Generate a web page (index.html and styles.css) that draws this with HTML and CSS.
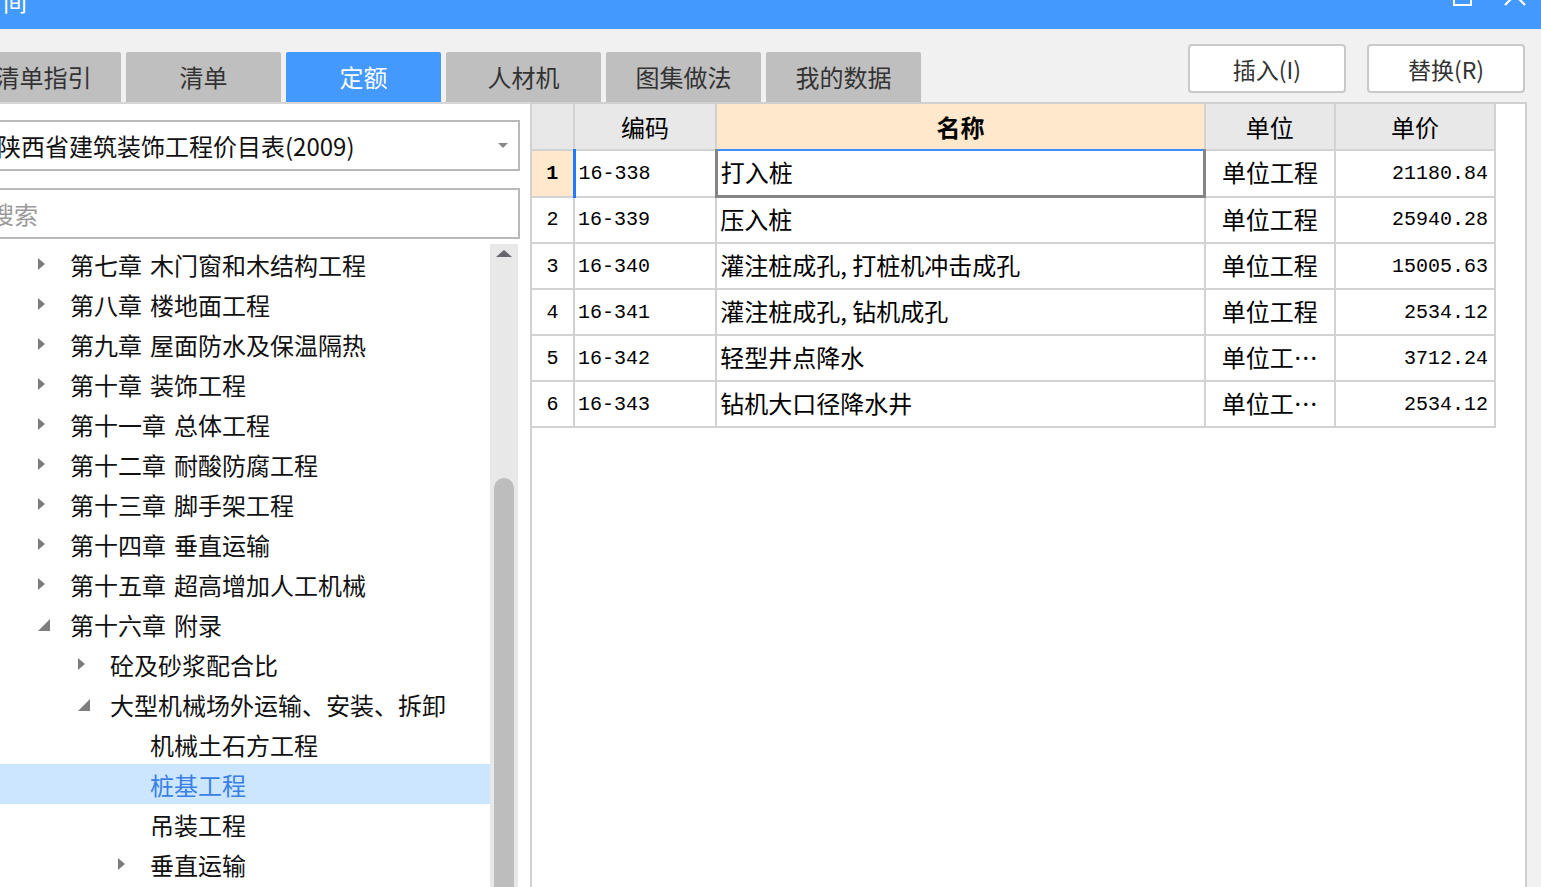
FILE: index.html
```html
<!DOCTYPE html>
<html lang="zh-CN">
<head>
<meta charset="utf-8">
<title>定额查询</title>
<link rel="stylesheet" href="styles.css">
</head>
<body>
<div class="window">
  <header class="titlebar">
    <span class="title">间</span>
    <div class="win-controls">
      <svg class="ctl-max" width="20" height="20" viewBox="0 0 20 20"><rect x="1" y="1" width="17" height="16" fill="none" stroke="#fff" stroke-width="2"/></svg>
      <svg class="ctl-close" width="22" height="22" viewBox="0 0 22 22"><path d="M1 0L21 20M21 0L1 20" stroke="#fff" stroke-width="2.2" fill="none"/></svg>
    </div>
  </header>

  <div class="toolbar">
    <nav class="tabs">
      <div class="tab">清单指引</div>
      <div class="tab">清单</div>
      <div class="tab active">定额</div>
      <div class="tab">人材机</div>
      <div class="tab">图集做法</div>
      <div class="tab">我的数据</div>
    </nav>
    <div class="actions">
      <button class="btn">插入(I)</button>
      <button class="btn">替换(R)</button>
    </div>
  </div>

  <main class="content">
    <aside class="left-panel">
      <div class="select">
        <span class="select-text">陕西省建筑装饰工程价目表(2009)</span>
        <svg class="select-arrow" width="10" height="5" viewBox="0 0 10 5"><path d="M0 0H10L5 5Z" fill="#8a8a8a"/></svg>
      </div>
      <div class="search">搜索</div>
      <div class="tree-wrap">
        <ul class="tree">
          <li class="node l1"><span class="tg"><svg class="tri" width="8" height="12" viewBox="0 0 8 12"><path d="M0 0L7 6L0 12Z"/></svg></span>第七章<span class="sp"> </span>木门窗和木结构工程</li>
          <li class="node l1"><span class="tg"><svg class="tri" width="8" height="12" viewBox="0 0 8 12"><path d="M0 0L7 6L0 12Z"/></svg></span>第八章<span class="sp"> </span>楼地面工程</li>
          <li class="node l1"><span class="tg"><svg class="tri" width="8" height="12" viewBox="0 0 8 12"><path d="M0 0L7 6L0 12Z"/></svg></span>第九章<span class="sp"> </span>屋面防水及保温隔热</li>
          <li class="node l1"><span class="tg"><svg class="tri" width="8" height="12" viewBox="0 0 8 12"><path d="M0 0L7 6L0 12Z"/></svg></span>第十章<span class="sp"> </span>装饰工程</li>
          <li class="node l1"><span class="tg"><svg class="tri" width="8" height="12" viewBox="0 0 8 12"><path d="M0 0L7 6L0 12Z"/></svg></span>第十一章<span class="sp"> </span>总体工程</li>
          <li class="node l1"><span class="tg"><svg class="tri" width="8" height="12" viewBox="0 0 8 12"><path d="M0 0L7 6L0 12Z"/></svg></span>第十二章<span class="sp"> </span>耐酸防腐工程</li>
          <li class="node l1"><span class="tg"><svg class="tri" width="8" height="12" viewBox="0 0 8 12"><path d="M0 0L7 6L0 12Z"/></svg></span>第十三章<span class="sp"> </span>脚手架工程</li>
          <li class="node l1"><span class="tg"><svg class="tri" width="8" height="12" viewBox="0 0 8 12"><path d="M0 0L7 6L0 12Z"/></svg></span>第十四章<span class="sp"> </span>垂直运输</li>
          <li class="node l1"><span class="tg"><svg class="tri" width="8" height="12" viewBox="0 0 8 12"><path d="M0 0L7 6L0 12Z"/></svg></span>第十五章<span class="sp"> </span>超高增加人工机械</li>
          <li class="node l1"><span class="tg"><svg class="exp" width="12" height="12" viewBox="0 0 12 12"><path d="M12 0V12H0Z"/></svg></span>第十六章<span class="sp"> </span>附录</li>
          <li class="node l2"><span class="tg"><svg class="tri" width="8" height="12" viewBox="0 0 8 12"><path d="M0 0L7 6L0 12Z"/></svg></span>砼及砂浆配合比</li>
          <li class="node l2"><span class="tg"><svg class="exp" width="12" height="12" viewBox="0 0 12 12"><path d="M12 0V12H0Z"/></svg></span>大型机械场外运输、安装、拆卸</li>
          <li class="node l3"><span class="tg"></span>机械土石方工程</li>
          <li class="node l3 selected"><span class="tg"></span>桩基工程</li>
          <li class="node l3"><span class="tg"></span>吊装工程</li>
          <li class="node l2b"><span class="tg"><svg class="tri" width="8" height="12" viewBox="0 0 8 12"><path d="M0 0L7 6L0 12Z"/></svg></span>垂直运输</li>
        </ul>
        <div class="scrollbar">
          <svg class="sb-up" width="16" height="7" viewBox="0 0 16 7"><path d="M0 7L8 0L16 7Z" fill="#66666e"/></svg>
          <div class="sb-thumb"></div>
        </div>
      </div>
    </aside>

    <section class="grid-panel">
      <table class="grid">
        <colgroup>
          <col class="c-no"><col class="c-code"><col class="c-name"><col class="c-unit"><col class="c-price">
        </colgroup>
        <thead>
          <tr>
            <th></th>
            <th>编码</th>
            <th class="th-active">名称</th>
            <th>单位</th>
            <th>单价</th>
          </tr>
        </thead>
        <tbody>
          <tr>
            <td class="no no-active">1</td>
            <td class="code code-active">16-338</td>
            <td class="name name-focus">打入桩</td>
            <td class="unit">单位工程</td>
            <td class="price">21180.84</td>
          </tr>
          <tr>
            <td class="no">2</td>
            <td class="code">16-339</td>
            <td class="name">压入桩</td>
            <td class="unit">单位工程</td>
            <td class="price">25940.28</td>
          </tr>
          <tr>
            <td class="no">3</td>
            <td class="code">16-340</td>
            <td class="name">灌注桩成孔, 打桩机冲击成孔</td>
            <td class="unit">单位工程</td>
            <td class="price">15005.63</td>
          </tr>
          <tr>
            <td class="no">4</td>
            <td class="code">16-341</td>
            <td class="name">灌注桩成孔, 钻机成孔</td>
            <td class="unit">单位工程</td>
            <td class="price">2534.12</td>
          </tr>
          <tr>
            <td class="no">5</td>
            <td class="code">16-342</td>
            <td class="name">轻型井点降水</td>
            <td class="unit">单位工…</td>
            <td class="price">3712.24</td>
          </tr>
          <tr>
            <td class="no">6</td>
            <td class="code">16-343</td>
            <td class="name">钻机大口径降水井</td>
            <td class="unit">单位工…</td>
            <td class="price">2534.12</td>
          </tr>
        </tbody>
      </table>
    </section>
  </main>
</div>
</body>
</html>
```

FILE: styles.css
```css
html, body {
  margin: 0;
  padding: 0;
}

body {
  width: 1541px;
  height: 887px;
  overflow: hidden;
  background: #f1f1f1;
  font-family: "Noto Sans CJK SC", "Noto Sans", sans-serif;
  font-size: 24px;
  color: #111;
}

.window {
  display: flex;
  flex-direction: column;
  height: 887px;
}

/* ---------- title bar ---------- */
.titlebar {
  height: 29px;
  flex: none;
  background: #4499ff;
  display: flex;
  justify-content: space-between;
  align-items: flex-start;
  overflow: hidden;
}

.title {
  color: #fff;
  font-size: 24px;
  line-height: 24px;
  margin-top: -11px;
  margin-left: 3px;
}

.win-controls {
  display: flex;
  align-items: flex-start;
  gap: 31px;
  margin-right: 15px;
}

.ctl-max {
  margin-top: -12px;
}

.ctl-close {
  margin-top: -15px;
}

/* ---------- toolbar ---------- */
.toolbar {
  height: 73px;
  flex: none;
  display: flex;
  justify-content: space-between;
  align-items: flex-end;
}

.tabs {
  display: flex;
  gap: 5px;
  margin-left: -34px;
}

.tab {
  width: 155px;
  height: 50px;
  background: #bfbfbf;
  color: #333;
  border-radius: 2px 2px 0 0;
  display: flex;
  align-items: center;
  justify-content: center;
  font-size: 24px;
  padding-bottom: 1px;
  box-sizing: border-box;
}

.tab.active {
  background: #4499ff;
  color: #fff;
}

.actions {
  align-self: flex-start;
  margin-top: 15px;
  margin-right: 16px;
  display: flex;
  gap: 21px;
}

.btn {
  width: 158px;
  height: 49px;
  background: #fff;
  border: 2px solid #c9c9c9;
  border-radius: 4px;
  font-family: "Noto Sans CJK SC", "Noto Sans", sans-serif;
  font-size: 23px;
  color: #333;
  padding: 0;
}

/* ---------- content ---------- */
.content {
  flex: 1;
  display: flex;
  min-height: 0;
}

.left-panel {
  width: 530px;
  flex: none;
  box-sizing: border-box;
  background: #fff;
  border-top: 2px solid #d6d6d6;
  padding-top: 16px;
  display: flex;
  flex-direction: column;
  overflow: hidden;
}

.select,
.search {
  height: 51px;
  box-sizing: border-box;
  margin: 0 10px 0 -20px;
  border: 2px solid #b9b9b9;
  display: flex;
  align-items: center;
  flex: none;
}

.select {
  justify-content: space-between;
  padding: 0 10px 0 15px;
  color: #111;
}

.search {
  margin-top: 17px;
  padding-left: 8px;
  color: #9a9a9a;
}

.tree-wrap {
  margin-top: 5px;
  flex: 1;
  display: flex;
  padding-right: 12px;
  min-height: 0;
}

.tree {
  flex: 1;
  list-style: none;
  margin: 0;
  padding: 0;
}

.node {
  height: 40px;
  display: flex;
  align-items: center;
  white-space: nowrap;
  color: #111;
}

.sp {
  display: inline-block;
  width: 8px;
}

.l1 { padding-left: 38px; }
.l2 { padding-left: 78px; }
.l2b { padding-left: 118px; }
.l3 { padding-left: 118px; }

.tg {
  width: 32px;
  flex: none;
  display: flex;
  align-items: center;
}

.tri path,
.exp path {
  fill: #7d7d7d;
}

.exp {
  margin-top: 2px;
}

.node.selected {
  background: #cce6ff;
  color: #3a80e4;
}

.scrollbar {
  width: 28px;
  flex: none;
  background: #e8e8e8;
  display: flex;
  flex-direction: column;
  align-items: center;
}

.sb-up {
  margin-top: 6px;
}

.sb-thumb {
  margin-top: auto;
  width: 20px;
  height: 409px;
  background: #bdbdbd;
  border-radius: 10px 10px 0 0;
}

/* ---------- grid panel ---------- */
.grid-panel {
  width: 997px;
  flex: none;
  box-sizing: border-box;
  background: #fff;
  border: 2px solid #d0d0d0;
  border-bottom: none;
}

.grid {
  border-collapse: collapse;
  table-layout: fixed;
  width: 964px;
}

.c-no { width: 42px; }
.c-code { width: 142px; }
.c-name { width: 488px; }
.c-unit { width: 130px; }
.c-price { width: 160px; }

.grid th,
.grid td {
  border: 2px solid #d2d2d2;
  height: 44px;
  padding: 0 4px;
  white-space: nowrap;
  overflow: hidden;
  color: #000;
}

.grid thead th {
  background: #e8e8e8;
  font-weight: normal;
  font-size: 24px;
  height: 45px;
  border-top: none;
  border-left: none;
}

.grid thead th.th-active {
  background: #ffe8cc;
  font-weight: bold;
  border-bottom: 2px solid #3d8eff;
}

.grid td {
  font-size: 24px;
}

.grid td.no {
  border-left: none;
  text-align: center;
  font-family: "Liberation Mono", "DejaVu Sans Mono", monospace;
  font-size: 20px;
  padding: 0;
}

.grid td.no-active {
  background: #ffe8cc;
  font-weight: bold;
}

.grid td.code {
  font-family: "Liberation Mono", "DejaVu Sans Mono", monospace;
  font-size: 20px;
  padding-left: 3px;
}

.grid td.code-active {
  border-left: 3px solid #1f7bff;
}

.grid td.name,
.grid td.unit {
  height: 41px;
  padding-bottom: 3px;
}

.grid td.name {
  padding-left: 3px;
}

.grid td.name-focus {
  border-left: 3px solid #858585;
  border-right: 3px solid #858585;
  border-bottom: 3px solid #858585;
}

.grid td.unit {
  text-align: center;
}

.grid td.price {
  text-align: right;
  padding-right: 6px;
  font-family: "Liberation Mono", "DejaVu Sans Mono", monospace;
  font-size: 20px;
}
```
